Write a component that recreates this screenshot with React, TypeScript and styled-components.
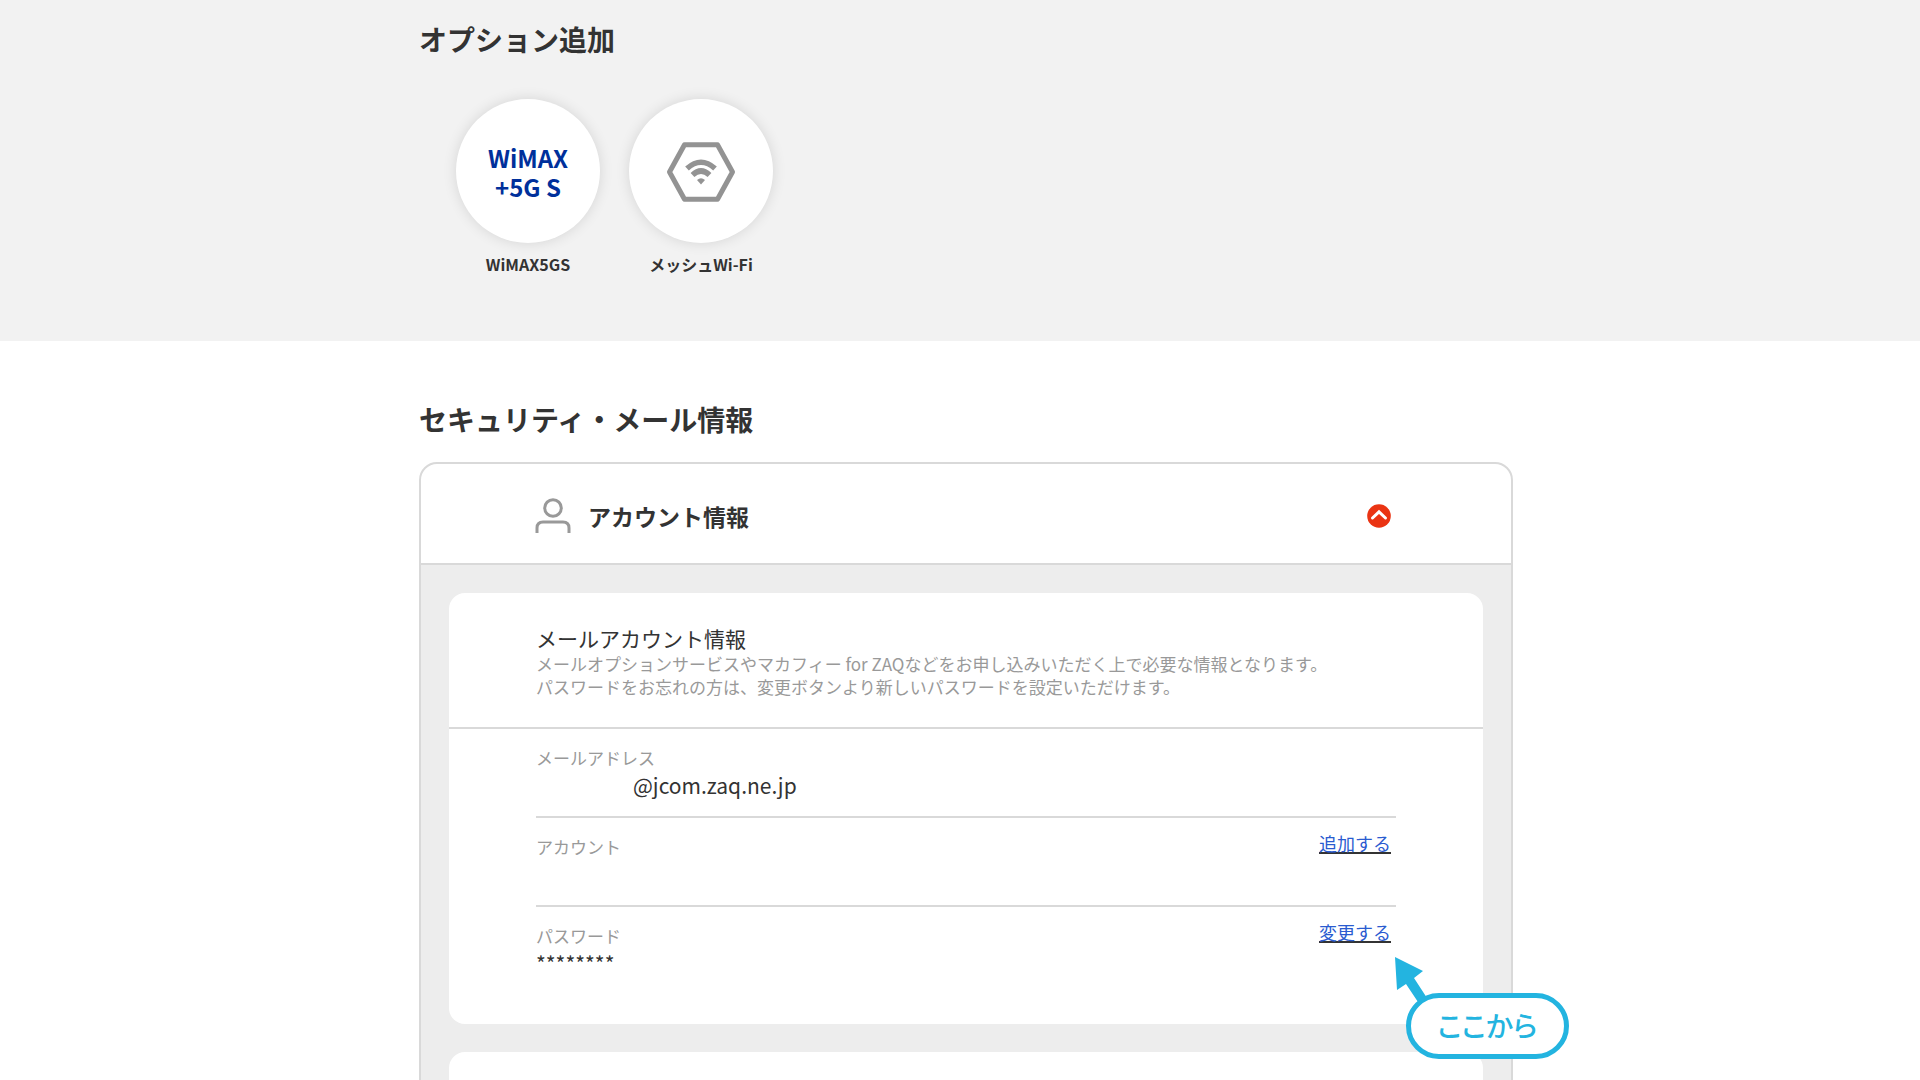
import React, { useState } from "react";
import styled, { createGlobalStyle } from "styled-components";

const GlobalStyle = createGlobalStyle`
  *, *::before, *::after { box-sizing: border-box; }
  body {
    margin: 0;
    background: #fff;
    color: #333;
    font-family: "Noto Sans CJK JP", sans-serif;
  }
  h1, h2, h3, p { margin: 0; }
`;

const Page = styled.main`
  height: 100vh;
  overflow: hidden;
`;

const Band = styled.section<{ $tone?: "gray" }>`
  padding: ${(p) => (p.$tone ? "20px 12px 65px 24px" : "59px 12px 0 24px")};
  background: ${(p) => (p.$tone ? "#f2f2f2" : "#fff")};
`;

const Container = styled.div`
  max-width: 1094px;
  margin: 0 auto;
`;

const SectionTitle = styled.h2`
  font-size: 28px;
  font-weight: 700;
  line-height: 38px;
`;

const OptionList = styled.div`
  display: flex;
  gap: 29px;
  padding: 41px 37px 0;
`;

const OptionLink = styled.a`
  display: flex;
  flex-direction: column;
  align-items: center;
  gap: 9px;
  width: 144px;
  color: inherit;
  font-size: 16px;
  font-weight: 700;
  line-height: 24px;
  text-decoration: none;
  white-space: nowrap;
`;

const OptionCircle = styled.span`
  display: flex;
  align-items: center;
  justify-content: center;
  width: 144px;
  height: 144px;
  padding-top: 2px;
  border-radius: 50%;
  background: #fff;
  box-shadow: 0 0 14px rgba(0, 0, 0, 0.12);
`;

const WimaxMark = styled.span`
  color: #00309b;
  font-size: 24px;
  font-weight: 700;
  line-height: 29px;
  text-align: center;
`;

const Accordion = styled.div`
  margin-top: 24px;
  border: 2px solid #d9d9d9;
  border-radius: 18px 18px 0 0;
`;

const AccordionHeader = styled.button`
  display: flex;
  align-items: center;
  width: 100%;
  padding: 34px 120px 29px 114px;
  border: 0;
  background: none;
  color: inherit;
  font: inherit;
  text-align: left;
  cursor: pointer;
`;

const HeaderTitle = styled.span`
  flex: 1;
  padding-left: 17px;
  font-size: 23px;
  font-weight: 700;
  line-height: 32px;
`;

const AccordionBody = styled.div`
  display: flex;
  flex-direction: column;
  gap: 28px;
  padding: 28px;
  border-top: 2px solid #d9d9d9;
  background: #ededed;
`;

const Card = styled.article`
  min-height: 160px;
  padding-bottom: 30px;
  border-radius: 16px;
  background: #fff;
`;

const CardIntro = styled.header`
  padding: 31px 87px 29px;
  border-bottom: 2px solid #d9d9d9;
`;

const CardTitle = styled.h3`
  font-size: 21px;
  font-weight: 400;
  line-height: 28px;
`;

const CardText = styled.p`
  color: #999;
  font-size: 17px;
  line-height: 23px;
`;

const Rows = styled.div`
  padding: 0 87px;
`;

const Row = styled.div`
  position: relative;
  display: flex;
  justify-content: space-between;
  align-items: flex-start;
  & + & {
    border-top: 2px solid #d9d9d9;
  }
`;

const Field = styled.div`
  padding: 17px 0 15px;
`;

const FieldLabel = styled.div`
  color: #999;
  font-size: 17px;
  line-height: 24px;
`;

const FieldValue = styled.div<{ $indent?: boolean }>`
  min-height: 31px;
  padding-left: ${(p) => (p.$indent ? "97px" : "0")};
  font-size: 21px;
  line-height: 31px;
`;

const RowLink = styled.a`
  margin: 13px 5px 0 0;
  color: #2a5bd0;
  font-size: 18px;
  line-height: 24px;
  text-decoration: underline #333 2px;
  text-underline-offset: 1px;
`;

const Callout = styled.div`
  position: absolute;
  top: 50px;
  left: calc(100% - 2px);
  z-index: 1;
`;

const CalloutArrow = styled.svg`
  display: block;
  margin-bottom: -9px;
`;

const CalloutPill = styled.div`
  position: relative;
  display: flex;
  align-items: center;
  justify-content: center;
  width: 163px;
  height: 66px;
  margin-left: 12px;
  border: 5px solid #23b4e0;
  border-radius: 33px;
  background: #fff;
  color: #23b4e0;
  font-size: 28px;
  font-weight: 500;
  font-feature-settings: "palt";
  line-height: 40px;
  padding-bottom: 2px;
  white-space: nowrap;
`;

const MeshIcon = () => (
  <svg width="70" height="60" viewBox="0 0 70 60" fill="none" stroke="#939393" aria-hidden="true">
    <path d="M18.5 2.8H51.5L66.5 30 51.5 57.2H18.5L3.5 30Z" strokeWidth="5" strokeLinejoin="round" />
    <path d="M21 26.5Q35 14 49 26.5" strokeWidth="5.5" />
    <path d="M26.5 33Q35 25 43.5 33" strokeWidth="5.5" />
    <path d="M31 38Q35 34.5 39 38L35 42.5Z" fill="#939393" stroke="none" />
  </svg>
);

const UserIcon = () => (
  <svg width="36" height="36" viewBox="0 0 36 36" fill="none" stroke="#999" strokeWidth="3" aria-hidden="true">
    <circle cx="18" cy="10" r="8.3" />
    <path d="M2 35V30Q2 24 8 24H28Q34 24 34 30V35" />
  </svg>
);

const ChevronBadge = ({ open }: { open: boolean }) => (
  <svg width="24" height="24" viewBox="0 0 24 24" fill="none" aria-hidden="true">
    <circle cx="12" cy="12" r="11.8" fill="#ea3413" />
    <path
      d={open ? "M5.5 14 12 7.8 18.5 14" : "M5.5 10 12 16.2 18.5 10"}
      stroke="#fff"
      strokeWidth="3"
      strokeLinecap="round"
    />
  </svg>
);

const StartHere = () => (
  <Callout>
    <CalloutArrow width="36" height="45" viewBox="0 0 36 45" aria-hidden="true">
      <path d="M1 0 29 14 20 21 33 41 24 45 12 27 3 33Z" fill="#23b4e0" />
    </CalloutArrow>
    <CalloutPill>ここから</CalloutPill>
  </Callout>
);

export default function App() {
  const [open, setOpen] = useState(true);

  return (
    <Page>
      <GlobalStyle />
      <Band $tone="gray">
        <Container>
          <SectionTitle>オプション追加</SectionTitle>
          <OptionList>
            <OptionLink href="#wimax">
              <OptionCircle>
                <WimaxMark>
                  WiMAX
                  <br />
                  +5G S
                </WimaxMark>
              </OptionCircle>
              WiMAX5GS
            </OptionLink>
            <OptionLink href="#mesh">
              <OptionCircle>
                <MeshIcon />
              </OptionCircle>
              メッシュWi-Fi
            </OptionLink>
          </OptionList>
        </Container>
      </Band>

      <Band>
        <Container>
          <SectionTitle>セキュリティ・メール情報</SectionTitle>
          <Accordion>
            <AccordionHeader type="button" aria-expanded={open} onClick={() => setOpen(!open)}>
              <UserIcon />
              <HeaderTitle>アカウント情報</HeaderTitle>
              <ChevronBadge open={open} />
            </AccordionHeader>
            {open && (
              <AccordionBody>
                <Card>
                  <CardIntro>
                    <CardTitle>メールアカウント情報</CardTitle>
                    <CardText>
                      メールオプションサービスやマカフィー for ZAQなどをお申し込みいただく上で必要な情報となります。
                      <br />
                      パスワードをお忘れの方は、変更ボタンより新しいパスワードを設定いただけます。
                    </CardText>
                  </CardIntro>
                  <Rows>
                    <Row>
                      <Field>
                        <FieldLabel>メールアドレス</FieldLabel>
                        <FieldValue $indent>@jcom.zaq.ne.jp</FieldValue>
                      </Field>
                    </Row>
                    <Row>
                      <Field>
                        <FieldLabel>アカウント</FieldLabel>
                        <FieldValue />
                      </Field>
                      <RowLink href="#add">追加する</RowLink>
                    </Row>
                    <Row>
                      <Field>
                        <FieldLabel>パスワード</FieldLabel>
                        <FieldValue>********</FieldValue>
                      </Field>
                      <RowLink href="#change">変更する</RowLink>
                      <StartHere />
                    </Row>
                  </Rows>
                </Card>
                <Card />
              </AccordionBody>
            )}
          </Accordion>
        </Container>
      </Band>
    </Page>
  );
}
